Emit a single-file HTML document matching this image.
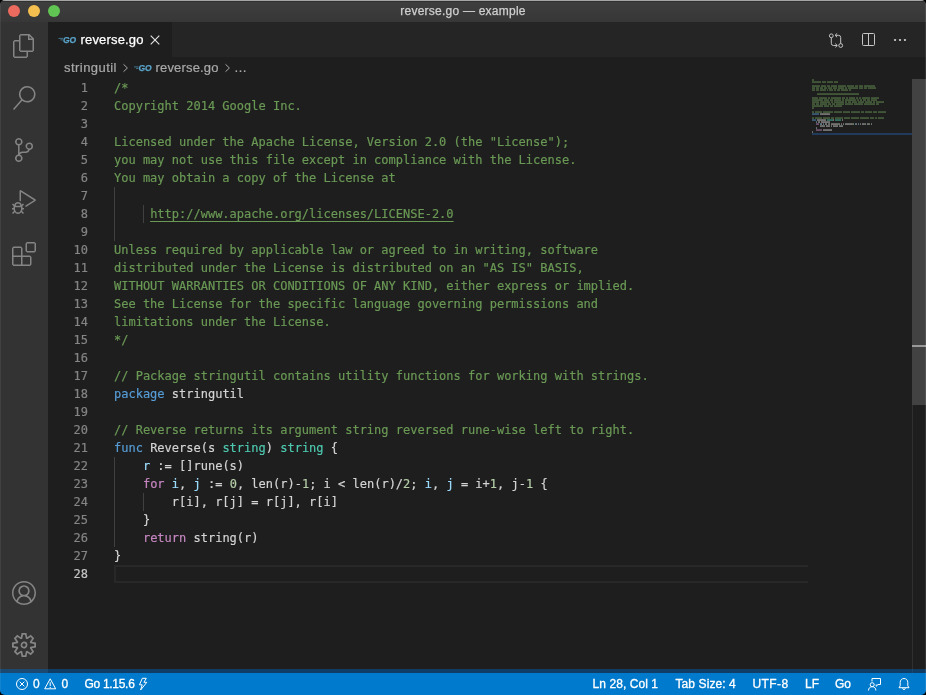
<!DOCTYPE html>
<html lang="en">
<head>
<meta charset="utf-8">
<title>reverse.go — example</title>
<style>
*{box-sizing:border-box;margin:0;padding:0}
html{width:926px;height:695px;overflow:hidden;background:#000}
body{width:926px;height:695px;overflow:hidden;background:#1e1e1e;border-radius:5px}
body{position:relative;will-change:transform;font-family:"Liberation Sans",sans-serif;font-size:13px;color:#ccc}
.abs{position:absolute}
#titlebar{left:0;top:0;width:926px;height:22px;background:linear-gradient(#3f3f3f,#373737)}
#titlebar .hl{left:0;top:0;width:926px;height:2px;background:#303030;border-top:1px solid #a6a6a6}
#titlebar .title{left:0;width:926px;top:0;height:22px;line-height:22px;text-align:center;font-size:12px;color:#cfcfcf;letter-spacing:.235px;-webkit-text-stroke:.25px #cfcfcf}
.tl{width:12px;height:12px;border-radius:50%;top:4.5px}
#activity{left:0;top:22px;width:48px;height:651px;background:#333333}
#activity svg{position:absolute;left:12px;width:24px;height:24px;fill:#858585}
#tabs{left:48px;top:22px;width:878px;height:35px;background:#252526}
#tab{left:0;top:0;width:124px;height:35px;background:#1e1e1e}
.tabname{-webkit-text-stroke:.25px #fff;left:32.500px;top:0;height:35px;line-height:35px;color:#fff;letter-spacing:.17px;white-space:pre}
.bc{-webkit-text-stroke:.2px #a9a9a9;top:0;height:22px;line-height:22px;white-space:pre}
#crumbs{left:48px;top:57px;width:878px;height:22px;background:#1e1e1e;color:#a9a9a9}
#editor{left:48px;top:79px;width:878px;height:594px;background:#1e1e1e}
.ln,.cl{-webkit-text-stroke:.18px;position:absolute;height:18px;line-height:18px;font-family:"DejaVu Sans Mono","Liberation Mono",monospace;font-size:12px;white-space:pre}
.ln{left:0;width:40px;text-align:right;color:#858585}
.cl{left:66px;color:#d4d4d4}
#minimap{left:764px;top:0}
#ruler{left:864px;top:0;width:1px;height:594px;background:#303030}
#slider{left:864px;top:0;width:14px;height:326px;background:#424242}
#cursormark{left:864px;top:266px;width:14px;height:2px;background:#9a9a9a}
.g{width:1px;background:#404040}
#curline{left:66px;top:486px;width:694px;height:18px;border:2px solid #282828;border-right:0}
.cur{color:#c6c6c6}
.u{text-decoration:underline;text-decoration-thickness:1px;text-underline-offset:3px}
.c{color:#6a9955}.k{color:#569cd6}.t{color:#4ec9b0}.f{color:#c586c0}.v{color:#9cdcfe}.n{color:#b5cea8}
#status{left:0;top:673px;width:926px;height:22px;background:#007acc;color:#fff;font-size:12px}
#status span{-webkit-text-stroke:.3px #fff;position:absolute;top:0;height:22px;line-height:22px;white-space:pre}
</style>
</head>
<body>
<div id="titlebar" class="abs">
  <div class="abs hl"></div>
  <div class="abs tl" style="left:8px;background:#ed6a5e"></div>
  <div class="abs tl" style="left:28px;background:#f5bf4f"></div>
  <div class="abs tl" style="left:48px;background:#61c554"></div>
  <div class="abs title">reverse.go — example</div>
</div>
<div id="activity" class="abs">
<svg style="top:12px" viewBox="0 0 24 24"><path d="M17.5 0h-9L7 1.500V6H2.500L1 7.500v15.070L2.500 24h12.070L16 22.570V18h4.700l1.300-1.430V4.500L17.500 0zm0 2.120l2.380 2.380H17.500V2.120zm-3 20.380h-12v-15H7v9.070L8.500 18h6v4.500zm6-6h-12v-15H16V6h4.500v10.500z"/></svg>
<svg style="top:64px" viewBox="0 0 24 24"><path d="M15.250 0a8.250 8.250 0 0 0-6.180 13.720L1 22.880l1.120 1 8.050-9.120A8.251 8.251 0 1 0 15.250.010V0zm0 15a6.750 6.750 0 1 1 0-13.500 6.750 6.750 0 0 1 0 13.500z"/></svg>
<svg style="top:116px" viewBox="0 0 24 24"><path d="M21.007 8.222A3.738 3.738 0 0 0 15.045 5.200a3.737 3.737 0 0 0 1.156 6.583 2.988 2.988 0 0 1-2.668 1.670h-2.990a4.456 4.456 0 0 0-2.989 1.165V7.400a3.737 3.737 0 1 0-1.494 0v9.117a3.776 3.776 0 1 0 1.816.099 2.990 2.990 0 0 1 2.668-1.667h2.990a4.484 4.484 0 0 0 4.223-3.039 3.736 3.736 0 0 0 3.250-3.687zM4.565 3.738a2.242 2.242 0 1 1 4.484 0 2.242 2.242 0 0 1-4.484 0zm4.484 16.441a2.242 2.242 0 1 1-4.484 0 2.242 2.242 0 0 1 4.484 0zm8.221-9.715a2.242 2.242 0 1 1 0-4.485 2.242 2.242 0 0 1 0 4.485z"/></svg>
<svg style="top:168px" viewBox="0 0 24 24"><path d="M10.940 13.500l-1.320 1.320a3.730 3.730 0 0 0-7.240 0L1.060 13.500 0 14.560l1.720 1.720-.220.220V18H0v1.500h1.500v.080c.077.489.214.966.410 1.420L0 22.940 1.060 24l1.650-1.650A4.308 4.308 0 0 0 6 24a4.310 4.310 0 0 0 3.290-1.650L10.940 24 12 22.940 10.090 21c.198-.464.336-.951.410-1.450v-.100H12V18h-1.500v-1.500l-.220-.220L12 14.560l-1.060-1.060zM6 13.500a2.250 2.250 0 0 1 2.250 2.250h-4.500A2.250 2.250 0 0 1 6 13.500zm3 6a3.330 3.330 0 0 1-3 3 3.330 3.330 0 0 1-3-3v-2.250h6v2.250zm14.760-9.900v1.260L13.500 17.370V15.600l8.500-5.370L9 2v9.460a5.070 5.070 0 0 0-1.500-.720V.630L8.640 0l15.120 9.600z"/></svg>
<svg style="top:220px" viewBox="0 0 24 24"><path d="M13.500 1.500L15 0h7.500L24 1.500V9l-1.500 1.500H15L13.500 9V1.500zm1.500 0V9h7.500V1.500H15zM0 15V6l1.500-1.500H9L10.500 6v7.500H18l1.500 1.500v7.500L18 24H1.500L0 22.500V15zm9-1.500V6H1.500v7.500H9zM9 15H1.500v7.500H9V15zm1.500 7.500H18V15h-7.500v7.500z"/></svg>
<svg style="top:559px" viewBox="0 0 16 16"><path d="M16 7.992C16 3.580 12.416 0 8 0S0 3.580 0 7.992c0 2.430 1.104 4.620 2.832 6.090.016.016.032.016.032.032.144.112.288.224.448.336.080.048.144.111.224.175A7.980 7.980 0 0 0 8.016 16a7.980 7.980 0 0 0 4.480-1.375c.080-.048.144-.111.224-.160.144-.111.304-.223.448-.335.016-.16.032-.16.032-.032 1.696-1.487 2.800-3.676 2.800-6.106zm-8 7.001c-1.504 0-2.880-.480-4.016-1.279.016-.128.048-.255.080-.383a4.170 4.170 0 0 1 .416-.991c.176-.304.384-.576.640-.816.240-.240.528-.463.816-.639.304-.176.624-.304.976-.400A4.150 4.150 0 0 1 8 10.342a4.185 4.185 0 0 1 2.928 1.166c.368.368.656.800.864 1.295.112.288.192.592.240.911A7.030 7.030 0 0 1 8 14.993zm-2.448-7.400a2.490 2.490 0 0 1-.208-1.024c0-.351.064-.703.208-1.023.144-.320.336-.607.576-.847.240-.240.528-.431.848-.575.320-.144.672-.208 1.024-.208.368 0 .704.064 1.024.208.320.144.608.336.848.575.240.240.432.528.576.847.144.320.208.672.208 1.023 0 .368-.064.704-.208 1.023a2.840 2.840 0 0 1-.576.848 2.840 2.840 0 0 1-.848.575 2.715 2.715 0 0 1-2.064 0 2.840 2.840 0 0 1-.848-.575 2.526 2.526 0 0 1-.560-.848zm7.424 5.306c0-.032-.016-.048-.016-.080a5.220 5.220 0 0 0-.688-1.406 4.883 4.883 0 0 0-1.088-1.135 5.207 5.207 0 0 0-1.040-.608 2.820 2.820 0 0 0 .464-.383 4.200 4.200 0 0 0 .624-.784 3.624 3.624 0 0 0 .528-1.934 3.710 3.710 0 0 0-.288-1.470 3.799 3.799 0 0 0-.816-1.199 3.845 3.845 0 0 0-1.200-.800 3.720 3.720 0 0 0-1.472-.287 3.720 3.720 0 0 0-1.472.288 3.631 3.631 0 0 0-1.200.815 3.840 3.840 0 0 0-.800 1.199 3.710 3.710 0 0 0-.288 1.470c0 .352.048.688.144 1.007.096.336.224.640.400.927.160.288.384.544.624.784.144.144.304.271.480.383a5.120 5.120 0 0 0-1.040.624c-.416.320-.784.703-1.088 1.119a4.999 4.999 0 0 0-.688 1.406c-.16.032-.16.064-.16.080C1.776 11.636.992 9.910.992 7.992.992 4.140 4.144.991 8 .991s7.008 3.149 7.008 7.001a6.960 6.960 0 0 1-2.032 4.907z"/></svg>
<svg style="top:611px" viewBox="0 0 24 24"><path fill-rule="evenodd" d="M19.850 8.750l4.150.830v4.840l-4.150.830 2.350 3.520-3.430 3.430-3.520-2.350-.830 4.150H9.580l-.830-4.150-3.520 2.350-3.430-3.430 2.350-3.520L0 14.420V9.580l4.150-.830L1.800 5.230 5.230 1.800l3.520 2.350L9.580 0h4.840l.830 4.150 3.520-2.350 3.430 3.430-2.350 3.520zm-1.570 5.070l4-.810v-2l-4-.810-.540-1.300 2.290-3.430-1.430-1.430-3.430 2.290-1.300-.540-.810-4h-2l-.810 4-1.300.540-3.430-2.290-1.430 1.430L6.380 8.900l-.540 1.300-4 .810v2l4 .810.540 1.300-2.290 3.430 1.430 1.430 3.430-2.290 1.300.540.810 4h2l.810-4 1.300-.540 3.430 2.290 1.430-1.430-2.290-3.430.540-1.300zm-8.186-4.672A3.430 3.430 0 0 1 12 8.570 3.440 3.440 0 0 1 15.430 12a3.430 3.430 0 1 1-5.336-2.852zm.956 4.274c.281.188.612.288.950.288A1.700 1.700 0 0 0 13.710 12a1.710 1.710 0 1 0-2.660 1.422z"/></svg>
</div>
<div id="tabs" class="abs">
  <div id="tab" class="abs">
    <svg class="abs go" style="left:10px;top:12px" width="19" height="11" viewBox="0 -0.500 19 11"><path d="M.5 3.900h4.500M2.500 5.400h2.300" stroke="#5aa5cb" stroke-width=".9" fill="none" opacity=".7"/><text x="5" y="8.200" font-family="Liberation Sans, sans-serif" font-weight="bold" font-style="italic" font-size="9.300" textLength="13.200" lengthAdjust="spacingAndGlyphs" fill="#5aa5cb" stroke="#5aa5cb" stroke-width=".25">GO</text></svg>
    <span class="abs tabname">reverse.go</span>
    <svg class="abs" style="left:99px;top:10px" width="16" height="16" viewBox="0 0 16 16"><path d="M3.700 3.700l8.600 8.600M12.300 3.700l-8.600 8.600" stroke="#e0e0e0" stroke-width="1.150" fill="none"/></svg>
  </div>
  <svg class="abs" style="left:780px;top:10px" width="16" height="16" viewBox="0 0 16 16" fill="none" stroke="#c5c5c5" stroke-width="1"><circle cx="3.300" cy="3.800" r="1.900"/><circle cx="12.700" cy="13.500" r="1.900"/><path d="M3.300 5.700v5.600a2.200 2.200 0 0 0 2.200 2.200h3.600M7.300 11.600l2 1.900-2 1.900M12.700 11.600V5.500a2.200 2.200 0 0 0-2.200-2.200H7.300M9.100 1.400l-2 1.900 2 1.900"/></svg>
  <svg class="abs" style="left:812px;top:9px" width="17" height="17" viewBox="0 0 17 17" fill="none" stroke="#c5c5c5" stroke-width="1"><rect x="2.500" y="2.500" width="12" height="12" rx="1"/><path d="M8.500 2.500v12"/></svg>
  <svg class="abs" style="left:844px;top:10px" width="16" height="16" viewBox="0 0 16 16" fill="#c5c5c5"><rect x="2.100" y="7.100" width="1.900" height="1.900" rx=".4"/><rect x="7.050" y="7.100" width="1.900" height="1.900" rx=".4"/><rect x="12" y="7.100" width="1.900" height="1.900" rx=".4"/></svg>
</div>
<div id="crumbs" class="abs">
  <span class="abs bc" style="left:16px;letter-spacing:.45px">stringutil</span>
  <svg class="abs" style="left:69px;top:3px" width="17" height="16" viewBox="-0.500 0 17 16"><path d="M6 4.300l3.900 3.700-3.900 3.700" stroke="#a9a9a9" stroke-width="1" fill="none"/></svg>
  <svg class="abs go" style="left:85px;top:6px" width="20" height="10" viewBox="-0.500 0 20 10"><path d="M.5 3.900h4.500M2.500 5.400h2.300" stroke="#5aa5cb" stroke-width=".9" fill="none" opacity=".7"/><text x="5" y="8.200" font-family="Liberation Sans, sans-serif" font-weight="bold" font-style="italic" font-size="9.300" textLength="13.200" lengthAdjust="spacingAndGlyphs" fill="#5aa5cb" stroke="#5aa5cb" stroke-width=".25">GO</text></svg>
  <span class="abs bc" style="left:107.500px;letter-spacing:.17px">reverse.go</span>
  <svg class="abs" style="left:171px;top:3px" width="17" height="16" viewBox="-0.500 0 17 16"><path d="M6 4.300l3.900 3.700-3.900 3.700" stroke="#a9a9a9" stroke-width="1" fill="none"/></svg>
  <span class="abs bc" style="left:186px;letter-spacing:0">…</span>
</div>
<div id="editor" class="abs">
<!--LS-->
<div class="abs g" style="left:66px;top:108px;height:54px"></div>
<div class="abs g" style="left:95px;top:126px;height:18px"></div>
<div class="abs g" style="left:66px;top:378px;height:90px"></div>
<div class="abs g" style="left:95px;top:414px;height:18px"></div>
<div class="abs" id="curline"></div>
<svg class="abs" id="minimap" width="100" height="58" viewBox="0 0 100 58" ><rect x="0" y="54" width="100" height="2" fill="#21395a"/><g opacity=".65"><rect x="0" y="0.4" width="2" height="1.3" fill="#6a9955"/><rect x="0" y="2.4" width="9" height="1.3" fill="#6a9955"/><rect x="10" y="2.4" width="4" height="1.3" fill="#6a9955"/><rect x="15" y="2.4" width="6" height="1.3" fill="#6a9955"/><rect x="22" y="2.4" width="4" height="1.3" fill="#6a9955"/><rect x="0" y="6.4" width="8" height="1.3" fill="#6a9955"/><rect x="9" y="6.4" width="5" height="1.3" fill="#6a9955"/><rect x="15" y="6.4" width="3" height="1.3" fill="#6a9955"/><rect x="19" y="6.4" width="6" height="1.3" fill="#6a9955"/><rect x="26" y="6.4" width="8" height="1.3" fill="#6a9955"/><rect x="35" y="6.4" width="7" height="1.3" fill="#6a9955"/><rect x="43" y="6.4" width="3" height="1.3" fill="#6a9955"/><rect x="47" y="6.4" width="4" height="1.3" fill="#6a9955"/><rect x="52" y="6.4" width="11" height="1.3" fill="#6a9955"/><rect x="0" y="8.4" width="3" height="1.3" fill="#6a9955"/><rect x="4" y="8.4" width="3" height="1.3" fill="#6a9955"/><rect x="8" y="8.4" width="3" height="1.3" fill="#6a9955"/><rect x="12" y="8.4" width="3" height="1.3" fill="#6a9955"/><rect x="16" y="8.4" width="4" height="1.3" fill="#6a9955"/><rect x="21" y="8.4" width="4" height="1.3" fill="#6a9955"/><rect x="26" y="8.4" width="6" height="1.3" fill="#6a9955"/><rect x="33" y="8.4" width="2" height="1.3" fill="#6a9955"/><rect x="36" y="8.4" width="10" height="1.3" fill="#6a9955"/><rect x="47" y="8.4" width="4" height="1.3" fill="#6a9955"/><rect x="52" y="8.4" width="3" height="1.3" fill="#6a9955"/><rect x="56" y="8.4" width="8" height="1.3" fill="#6a9955"/><rect x="0" y="10.4" width="3" height="1.3" fill="#6a9955"/><rect x="4" y="10.4" width="3" height="1.3" fill="#6a9955"/><rect x="8" y="10.4" width="6" height="1.3" fill="#6a9955"/><rect x="15" y="10.4" width="1" height="1.3" fill="#6a9955"/><rect x="17" y="10.4" width="4" height="1.3" fill="#6a9955"/><rect x="22" y="10.4" width="2" height="1.3" fill="#6a9955"/><rect x="25" y="10.4" width="3" height="1.3" fill="#6a9955"/><rect x="29" y="10.4" width="7" height="1.3" fill="#6a9955"/><rect x="37" y="10.4" width="2" height="1.3" fill="#6a9955"/><rect x="5" y="14.4" width="42" height="1.3" fill="#6a9955"/><rect x="0" y="18.4" width="6" height="1.3" fill="#6a9955"/><rect x="7" y="18.4" width="8" height="1.3" fill="#6a9955"/><rect x="16" y="18.4" width="2" height="1.3" fill="#6a9955"/><rect x="19" y="18.4" width="10" height="1.3" fill="#6a9955"/><rect x="30" y="18.4" width="3" height="1.3" fill="#6a9955"/><rect x="34" y="18.4" width="2" height="1.3" fill="#6a9955"/><rect x="37" y="18.4" width="6" height="1.3" fill="#6a9955"/><rect x="44" y="18.4" width="2" height="1.3" fill="#6a9955"/><rect x="47" y="18.4" width="2" height="1.3" fill="#6a9955"/><rect x="50" y="18.4" width="8" height="1.3" fill="#6a9955"/><rect x="59" y="18.4" width="8" height="1.3" fill="#6a9955"/><rect x="0" y="20.4" width="11" height="1.3" fill="#6a9955"/><rect x="12" y="20.4" width="5" height="1.3" fill="#6a9955"/><rect x="18" y="20.4" width="3" height="1.3" fill="#6a9955"/><rect x="22" y="20.4" width="7" height="1.3" fill="#6a9955"/><rect x="30" y="20.4" width="2" height="1.3" fill="#6a9955"/><rect x="33" y="20.4" width="11" height="1.3" fill="#6a9955"/><rect x="45" y="20.4" width="2" height="1.3" fill="#6a9955"/><rect x="48" y="20.4" width="2" height="1.3" fill="#6a9955"/><rect x="51" y="20.4" width="3" height="1.3" fill="#6a9955"/><rect x="55" y="20.4" width="3" height="1.3" fill="#6a9955"/><rect x="59" y="20.4" width="6" height="1.3" fill="#6a9955"/><rect x="0" y="22.4" width="7" height="1.3" fill="#6a9955"/><rect x="8" y="22.4" width="10" height="1.3" fill="#6a9955"/><rect x="19" y="22.4" width="2" height="1.3" fill="#6a9955"/><rect x="22" y="22.4" width="10" height="1.3" fill="#6a9955"/><rect x="33" y="22.4" width="2" height="1.3" fill="#6a9955"/><rect x="36" y="22.4" width="3" height="1.3" fill="#6a9955"/><rect x="40" y="22.4" width="5" height="1.3" fill="#6a9955"/><rect x="46" y="22.4" width="6" height="1.3" fill="#6a9955"/><rect x="53" y="22.4" width="7" height="1.3" fill="#6a9955"/><rect x="61" y="22.4" width="2" height="1.3" fill="#6a9955"/><rect x="64" y="22.4" width="8" height="1.3" fill="#6a9955"/><rect x="0" y="24.4" width="3" height="1.3" fill="#6a9955"/><rect x="4" y="24.4" width="3" height="1.3" fill="#6a9955"/><rect x="8" y="24.4" width="7" height="1.3" fill="#6a9955"/><rect x="16" y="24.4" width="3" height="1.3" fill="#6a9955"/><rect x="20" y="24.4" width="3" height="1.3" fill="#6a9955"/><rect x="24" y="24.4" width="8" height="1.3" fill="#6a9955"/><rect x="33" y="24.4" width="8" height="1.3" fill="#6a9955"/><rect x="42" y="24.4" width="9" height="1.3" fill="#6a9955"/><rect x="52" y="24.4" width="11" height="1.3" fill="#6a9955"/><rect x="64" y="24.4" width="3" height="1.3" fill="#6a9955"/><rect x="0" y="26.4" width="11" height="1.3" fill="#6a9955"/><rect x="12" y="26.4" width="5" height="1.3" fill="#6a9955"/><rect x="18" y="26.4" width="3" height="1.3" fill="#6a9955"/><rect x="22" y="26.4" width="8" height="1.3" fill="#6a9955"/><rect x="0" y="28.4" width="2" height="1.3" fill="#6a9955"/><rect x="0" y="32.4" width="2" height="1.3" fill="#6a9955"/><rect x="3" y="32.4" width="7" height="1.3" fill="#6a9955"/><rect x="11" y="32.4" width="10" height="1.3" fill="#6a9955"/><rect x="22" y="32.4" width="8" height="1.3" fill="#6a9955"/><rect x="31" y="32.4" width="7" height="1.3" fill="#6a9955"/><rect x="39" y="32.4" width="9" height="1.3" fill="#6a9955"/><rect x="49" y="32.4" width="3" height="1.3" fill="#6a9955"/><rect x="53" y="32.4" width="7" height="1.3" fill="#6a9955"/><rect x="61" y="32.4" width="4" height="1.3" fill="#6a9955"/><rect x="66" y="32.4" width="8" height="1.3" fill="#6a9955"/><rect x="0" y="34.4" width="7" height="1.3" fill="#569cd6"/><rect x="8" y="34.4" width="10" height="1.3" fill="#d4d4d4"/><rect x="0" y="38.4" width="2" height="1.3" fill="#6a9955"/><rect x="3" y="38.4" width="7" height="1.3" fill="#6a9955"/><rect x="11" y="38.4" width="7" height="1.3" fill="#6a9955"/><rect x="19" y="38.4" width="3" height="1.3" fill="#6a9955"/><rect x="23" y="38.4" width="8" height="1.3" fill="#6a9955"/><rect x="32" y="38.4" width="6" height="1.3" fill="#6a9955"/><rect x="39" y="38.4" width="8" height="1.3" fill="#6a9955"/><rect x="48" y="38.4" width="9" height="1.3" fill="#6a9955"/><rect x="58" y="38.4" width="4" height="1.3" fill="#6a9955"/><rect x="63" y="38.4" width="2" height="1.3" fill="#6a9955"/><rect x="66" y="38.4" width="6" height="1.3" fill="#6a9955"/><rect x="0" y="40.4" width="4" height="1.3" fill="#569cd6"/><rect x="5" y="40.4" width="9" height="1.3" fill="#d4d4d4"/><rect x="15" y="40.4" width="6" height="1.3" fill="#4ec9b0"/><rect x="21" y="40.4" width="1" height="1.3" fill="#d4d4d4"/><rect x="23" y="40.4" width="6" height="1.3" fill="#4ec9b0"/><rect x="30" y="40.4" width="1" height="1.3" fill="#d4d4d4"/><rect x="4" y="42.4" width="1" height="1.3" fill="#9cdcfe"/><rect x="6" y="42.4" width="2" height="1.3" fill="#d4d4d4"/><rect x="9" y="42.4" width="9" height="1.3" fill="#d4d4d4"/><rect x="4" y="44.4" width="3" height="1.3" fill="#c586c0"/><rect x="8" y="44.4" width="1" height="1.3" fill="#9cdcfe"/><rect x="9" y="44.4" width="1" height="1.3" fill="#d4d4d4"/><rect x="11" y="44.4" width="1" height="1.3" fill="#9cdcfe"/><rect x="13" y="44.4" width="2" height="1.3" fill="#d4d4d4"/><rect x="16" y="44.4" width="1" height="1.3" fill="#b5cea8"/><rect x="17" y="44.4" width="1" height="1.3" fill="#d4d4d4"/><rect x="19" y="44.4" width="7" height="1.3" fill="#d4d4d4"/><rect x="26" y="44.4" width="1" height="1.3" fill="#b5cea8"/><rect x="27" y="44.4" width="1" height="1.3" fill="#d4d4d4"/><rect x="29" y="44.4" width="1" height="1.3" fill="#d4d4d4"/><rect x="31" y="44.4" width="1" height="1.3" fill="#d4d4d4"/><rect x="33" y="44.4" width="7" height="1.3" fill="#d4d4d4"/><rect x="40" y="44.4" width="1" height="1.3" fill="#b5cea8"/><rect x="41" y="44.4" width="1" height="1.3" fill="#d4d4d4"/><rect x="43" y="44.4" width="1" height="1.3" fill="#9cdcfe"/><rect x="44" y="44.4" width="1" height="1.3" fill="#d4d4d4"/><rect x="46" y="44.4" width="1" height="1.3" fill="#9cdcfe"/><rect x="48" y="44.4" width="1" height="1.3" fill="#d4d4d4"/><rect x="50" y="44.4" width="2" height="1.3" fill="#d4d4d4"/><rect x="52" y="44.4" width="1" height="1.3" fill="#b5cea8"/><rect x="53" y="44.4" width="1" height="1.3" fill="#d4d4d4"/><rect x="55" y="44.4" width="2" height="1.3" fill="#d4d4d4"/><rect x="57" y="44.4" width="1" height="1.3" fill="#b5cea8"/><rect x="59" y="44.4" width="1" height="1.3" fill="#d4d4d4"/><rect x="8" y="46.4" width="5" height="1.3" fill="#d4d4d4"/><rect x="14" y="46.4" width="4" height="1.3" fill="#d4d4d4"/><rect x="19" y="46.4" width="1" height="1.3" fill="#d4d4d4"/><rect x="21" y="46.4" width="5" height="1.3" fill="#d4d4d4"/><rect x="27" y="46.4" width="4" height="1.3" fill="#d4d4d4"/><rect x="4" y="48.4" width="1" height="1.3" fill="#d4d4d4"/><rect x="4" y="50.4" width="6" height="1.3" fill="#c586c0"/><rect x="11" y="50.4" width="9" height="1.3" fill="#d4d4d4"/><rect x="0" y="52.4" width="1" height="1.3" fill="#d4d4d4"/></g></svg>
<div class="abs" id="ruler"></div>
<div class="abs" id="slider"></div>
<div class="abs" id="cursormark"></div>
<div class="ln" style="top:0px">1</div>
<div class="cl" style="top:0px"><span class="c">/*</span></div>
<div class="ln" style="top:18px">2</div>
<div class="cl" style="top:18px"><span class="c">Copyright 2014 Google Inc.</span></div>
<div class="ln" style="top:36px">3</div>
<div class="ln" style="top:54px">4</div>
<div class="cl" style="top:54px"><span class="c">Licensed under the Apache License, Version 2.0 (the "License");</span></div>
<div class="ln" style="top:72px">5</div>
<div class="cl" style="top:72px"><span class="c">you may not use this file except in compliance with the License.</span></div>
<div class="ln" style="top:90px">6</div>
<div class="cl" style="top:90px"><span class="c">You may obtain a copy of the License at</span></div>
<div class="ln" style="top:108px">7</div>
<div class="ln" style="top:126px">8</div>
<div class="cl" style="top:126px"><span class="c">     </span><span class="c u">http://www.apache.org/licenses/LICENSE-2.0</span></div>
<div class="ln" style="top:144px">9</div>
<div class="ln" style="top:162px">10</div>
<div class="cl" style="top:162px"><span class="c">Unless required by applicable law or agreed to in writing, software</span></div>
<div class="ln" style="top:180px">11</div>
<div class="cl" style="top:180px"><span class="c">distributed under the License is distributed on an "AS IS" BASIS,</span></div>
<div class="ln" style="top:198px">12</div>
<div class="cl" style="top:198px"><span class="c">WITHOUT WARRANTIES OR CONDITIONS OF ANY KIND, either express or implied.</span></div>
<div class="ln" style="top:216px">13</div>
<div class="cl" style="top:216px"><span class="c">See the License for the specific language governing permissions and</span></div>
<div class="ln" style="top:234px">14</div>
<div class="cl" style="top:234px"><span class="c">limitations under the License.</span></div>
<div class="ln" style="top:252px">15</div>
<div class="cl" style="top:252px"><span class="c">*/</span></div>
<div class="ln" style="top:270px">16</div>
<div class="ln" style="top:288px">17</div>
<div class="cl" style="top:288px"><span class="c">// Package stringutil contains utility functions for working with strings.</span></div>
<div class="ln" style="top:306px">18</div>
<div class="cl" style="top:306px"><span class="k">package</span> stringutil</div>
<div class="ln" style="top:324px">19</div>
<div class="ln" style="top:342px">20</div>
<div class="cl" style="top:342px"><span class="c">// Reverse returns its argument string reversed rune-wise left to right.</span></div>
<div class="ln" style="top:360px">21</div>
<div class="cl" style="top:360px"><span class="k">func</span> Reverse(s <span class="t">string</span>) <span class="t">string</span> {</div>
<div class="ln" style="top:378px">22</div>
<div class="cl" style="top:378px">    <span class="v">r</span> := []rune(s)</div>
<div class="ln" style="top:396px">23</div>
<div class="cl" style="top:396px">    <span class="f">for</span> <span class="v">i</span>, <span class="v">j</span> := <span class="n">0</span>, len(r)-<span class="n">1</span>; i &lt; len(r)/<span class="n">2</span>; <span class="v">i</span>, <span class="v">j</span> = i+<span class="n">1</span>, j-<span class="n">1</span> {</div>
<div class="ln" style="top:414px">24</div>
<div class="cl" style="top:414px">        r[i], r[j] = r[j], r[i]</div>
<div class="ln" style="top:432px">25</div>
<div class="cl" style="top:432px">    }</div>
<div class="ln" style="top:450px">26</div>
<div class="cl" style="top:450px">    <span class="f">return</span> string(r)</div>
<div class="ln" style="top:468px">27</div>
<div class="cl" style="top:468px">}</div>
<div class="ln cur" style="top:486px">28</div>
<!--LE-->
</div>
<div class="abs" style="left:0;top:669px;width:926px;height:4px;background:rgba(0,100,190,.45)"></div>
<div id="status" class="abs">
  <svg class="abs" style="left:14px;top:3px" width="16" height="16" viewBox="0 0 16 16" fill="none" stroke="#fff" stroke-width="1"><circle cx="8" cy="8" r="5.500"/><path d="M5.700 5.700l4.600 4.600M10.300 5.700l-4.600 4.600"/></svg>
  <span style="left:33px">0</span>
  <svg class="abs" style="left:42px;top:3px" width="16" height="16" viewBox="0 0 16 16" fill="none" stroke="#fff" stroke-width="1"><path d="M8.200 2.800l5.500 10H2.700z" stroke-linejoin="round"/><path d="M8.200 6.200v3.800M8.200 10.900v1.100"/></svg>
  <span style="left:61.500px">0</span>
  <span style="left:84.500px;letter-spacing:-.3px">Go 1.15.6</span>
  <svg class="abs" style="left:135px;top:3px" width="16" height="16" viewBox="0 0 16 16" fill="none" stroke="#fff" stroke-width="1" stroke-linejoin="round"><path d="M7.300 2.300L4.500 8.800h2.700L5.600 14l6.200-7.700H8.900l2.400-4z"/></svg>
  <span style="left:592.500px;letter-spacing:.07px">Ln 28, Col 1</span>
  <span style="left:675.500px;letter-spacing:.09px">Tab Size: 4</span>
  <span style="left:752.500px;letter-spacing:.4px">UTF-8</span>
  <span style="left:805px">LF</span>
  <span style="left:835px">Go</span>
  <svg class="abs" style="left:866px;top:3px" width="16" height="16" viewBox="0 0 16 16" fill="none" stroke="#fff" stroke-width="1" stroke-linejoin="round"><path d="M6 5.500V2.500h8.500v6h-2.500l-1.800 1.800V8.500"/><circle cx="6.200" cy="8.700" r="2"/><path d="M2.500 14.500c0-2.400 1.600-3.800 3.700-3.800s3.700 1.400 3.700 3.800"/></svg>
  <svg class="abs" style="left:896px;top:3px" width="16" height="16" viewBox="0 0 16 16" fill="none" stroke="#fff" stroke-width="1" stroke-linejoin="round"><path d="M8 2.500c-2.300 0-3.800 1.700-3.800 3.900v3.400L3 11.700h10l-1.200-1.900V6.400c0-2.200-1.500-3.900-3.800-3.900z"/><path d="M6.700 12.200a1.300 1.300 0 0 0 2.600 0"/></svg>
</div>
<div class="abs" style="left:0;top:2px;width:1px;height:691px;background:rgba(255,255,255,.07)"></div>
<div class="abs" style="left:925px;top:2px;width:1px;height:691px;background:rgba(255,255,255,.1)"></div>
</body>
</html>
